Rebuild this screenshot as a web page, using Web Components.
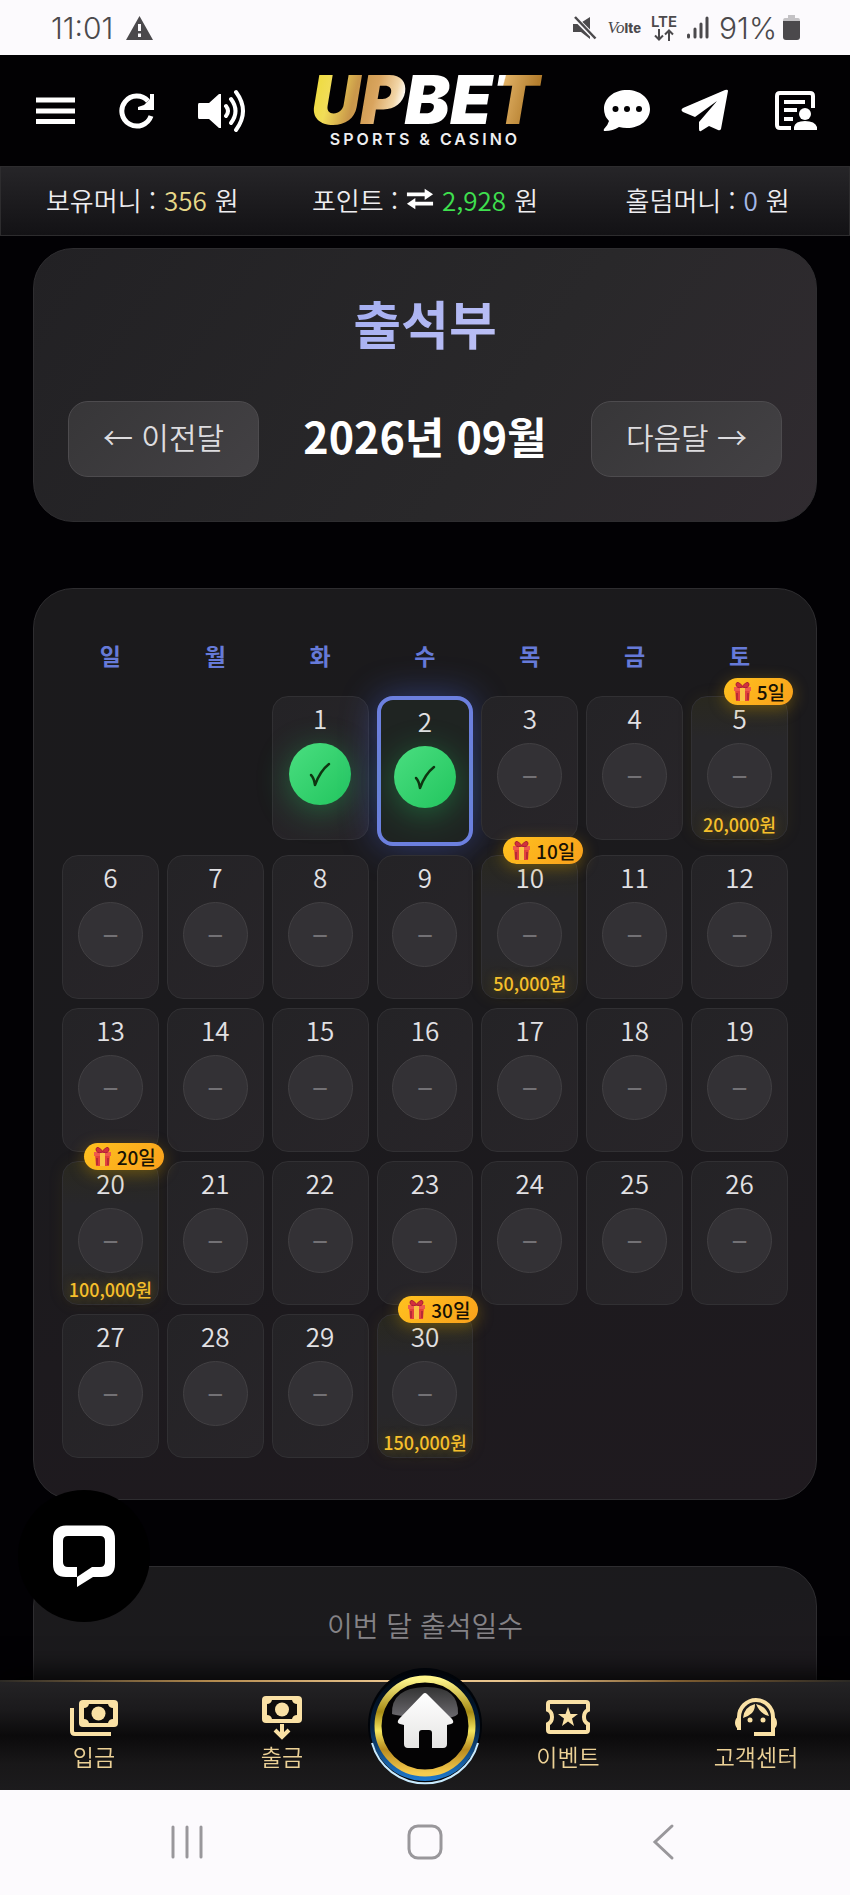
<!DOCTYPE html>
<html lang="ko">
<head>
<meta charset="utf-8">
<meta name="viewport" content="width=device-width, initial-scale=1">
<title>UPBET 출석부</title>
<style>
    html, body {
        height: 100%;
        margin: 0;
    }

    body {
        background: #020104;
        color: #e4e3e6;
        font-family: "Noto Sans CJK KR", "Noto Sans", sans-serif;
        font-size: 26px;
    }
</style>
</head>
<body>
<attendance-app></attendance-app>

<script>
const define = (name, html, setup) => {
    const template = document.createElement('template');
    template.innerHTML = html;

    customElements.define(name, class extends HTMLElement {
        constructor() {
            super();
            this.attachShadow({ mode: 'open' }).append(template.content.cloneNode(true));
        }

        connectedCallback() {
            if (setup) setup(this, this.shadowRoot);
        }
    });
};

define('status-bar', `
    <style>
        :host {
            display: flex;
            align-items: center;
            justify-content: space-between;
            flex: none;
            height: 55px;
            padding: 0 50px 0 51px;
            background: #fcfafd;
            color: #4b494c;
            font-family: Inter, "Liberation Sans", sans-serif;
            font-size: 30px;
            font-weight: 300;
        }
        div { display: flex; align-items: center; }
        .left { gap: 13px; }
        .right { gap: 10px; }
        .lte { font-size: 15px; font-weight: 600; line-height: 14px; display: grid; justify-items: center; }
        .volte { font-size: 13px; font-weight: 800; gap: 0; }
        .volte i { font-family: "Liberation Serif", serif; font-size: 17px; font-weight: 400; }
        .battery { gap: 6px; }
    </style>
    <div class="left">
        <span>11:01</span>
        <svg width="27" height="24" viewBox="0 0 27 24"><path d="M13.5 0 27 24H0Z" fill="#4b494c"/><path d="M13.500 8v7M13.500 17.500v3.500" stroke="#fcfafd" stroke-width="3"/></svg>
    </div>
    <div class="right">
        <svg width="24" height="24" viewBox="0 0 24 24"><path d="M0 8h6l11-7v22l-9-7H0Z" fill="#4b494c"/><path d="M0 0 24 24" stroke="#fcfafd" stroke-width="5"/><path d="M2 1 22.500 22.500" stroke="#4b494c" stroke-width="2.500"/></svg>
        <div class="volte"><i>Vo</i>lte</div>
        <div class="lte">LTE
            <svg width="20" height="12" viewBox="0 0 20 12" fill="none" stroke="#4b494c" stroke-width="2"><path d="M5 0v11M1 6.500l4 4 4-4M15 12V1M11 5.500l4-4 4 4"/></svg>
        </div>
        <svg width="22" height="23" viewBox="0 0 22 23" stroke="#4b494c" stroke-width="3" stroke-linecap="round"><path d="M1.500 19v2M8 13v8M14 8v13M20 2v19"/></svg>
        <div class="battery"><span>91%</span>
            <svg width="17" height="25" viewBox="0 0 17 25"><path d="M5 0h7v3h3q2 0 2 3H0q0-3 2-3h3Z" fill="#c4c2c5"/><path d="M0 6h17v16q0 3-3 3H3q-3 0-3-3Z" fill="#4b494c"/></svg>
        </div>
    </div>
`);

define('brand-logo', `
    <style>
        :host { display: block; text-align: center; }
        a { display: block; text-decoration: none; }
        .name {
            display: block;
            padding: 0 6px;
            font: italic 900 68px/56px Inter, "Liberation Sans", sans-serif;
            color: transparent;
            background: linear-gradient(105deg, #eedb3e 0 5%, #f1dd58 12%, #c9974a 22%, #d9a45e 30%, #f2d6a8 38%, #fff 42% 79%, #e0b064 79.500%, #b27c2c 93%, #d9a84e);
            background-clip: text;
            -webkit-background-clip: text;
        }
        .tag {
            display: block;
            color: #eeeef0;
            font: 600 16px/24px Inter, "Liberation Sans", sans-serif;
            letter-spacing: 3px;
        }
    </style>
    <a href="#"><span class="name">UPBET</span><span class="tag">SPORTS &amp; CASINO</span></a>
`);

define('site-header', `
    <style>
        :host {
            display: grid;
            grid-template-columns: 1fr auto 1fr;
            align-items: center;
            flex: none;
            height: 111px;
            padding: 0 33px;
            background: #020103;
        }
        nav { display: flex; align-items: center; gap: 42px; }
        .links { justify-content: flex-end; gap: 30px; }
        .account { margin-left: 16px; }
        button, a { display: block; padding: 0; border: 0; background: none; color: #fff; }
        svg { display: block; }
    </style>
    <nav>
        <button aria-label="메뉴"><svg width="44" height="44" viewBox="0 0 44 44" stroke="#fff" stroke-width="5"><path d="M3 11h39M3 22h39M3 32.500h39"/></svg></button>
        <button aria-label="새로고침"><svg width="36" height="36" viewBox="0 0 36 36"><path d="M32 23A15 15 0 1 1 29 8" fill="none" stroke="#fff" stroke-width="5"/><path d="M35 1v16H19v-3l6-2 6-6V1Z" fill="#fff"/></svg></button>
        <button aria-label="소리"><svg width="52" height="44" viewBox="0 0 52 44"><path d="M2 14h10L22 5h2v34h-2L12 30H2q-1 0-1-2V16q0-2 1-2Z" fill="#fff"/><g fill="none" stroke="#fff" stroke-width="4" stroke-linecap="round"><path d="M29 17q4 5 0 10M34 10q9 12 0 24M39 3q14 19 0 38"/></g></svg></button>
    </nav>
    <brand-logo></brand-logo>
    <nav class="links">
        <a href="#" aria-label="채팅"><svg width="48" height="43" viewBox="0 0 48 43"><path d="M24 1C37 1 47 9 47 20S37 39 24 39q-4 0-8-1-6 4-14 4-2 0-1-2 4-4 5-8Q1 27 1 20C1 9 11 1 24 1Z" fill="#fff"/><g fill="#020103"><circle cx="12.500" cy="20" r="3"/><circle cx="24" cy="20" r="3"/><circle cx="36" cy="20" r="3"/></g></svg></a>
        <a href="#" aria-label="텔레그램"><svg width="48" height="44" viewBox="0 0 48 44"><path d="M47 2 40 40q-1 2-3 1l-9-4-8 5q-2 1-2-2v-7L36 12 14 28 2 23q-3-2 0-4L44 1q3-1 3 1Z" fill="#fff"/></svg></a>
        <a class="account" href="#" aria-label="내 정보"><svg width="42" height="40" viewBox="0 0 42 40"><path d="M38 17V5q0-3-3-3H5Q2 2 2 5v29q0 3 3 3h11" fill="none" stroke="#fff" stroke-width="4"/><path d="M9 11h21M9 19h13M9 28h9" stroke="#fff" stroke-width="4"/><circle cx="30" cy="23" r="6" fill="#fff"/><path d="M19 39v-3q1-6 11-6t12 6v3Z" fill="#fff"/></svg></a>
    </nav>
`);

define('money-item', `
    <style>
        :host { display: flex; align-items: center; justify-content: center; gap: 8px; padding-bottom: 4px; white-space: nowrap; }
        b { font-weight: inherit; color: var(--amount); }
    </style>
    <span></span>
    <slot></slot>
    <b></b>
    <span>원</span>
`, (host, root) => {
    root.querySelector('span').textContent = host.getAttribute('label') + ' :';
    root.querySelector('b').textContent = host.getAttribute('amount');
});

define('money-bar', `
    <style>
        :host {
            display: grid;
            grid-template-columns: repeat(3, 1fr);
            flex: none;
            height: 68px;
            border: 1px solid #2d2c2e;
            background: linear-gradient(#262528, #131215);
            color: #eeedf0;
            font-size: 26px;
            font-weight: 350;
        }
        button { display: block; padding: 0; border: 0; background: none; }
        svg { display: block; }
    </style>
    <money-item label="보유머니" amount="356" style="--amount: #e8d98a"></money-item>
    <money-item label="포인트" amount="2,928" style="--amount: #3fe04f">
        <button aria-label="포인트 전환"><svg width="28" height="24" viewBox="0 0 30 24" fill="#fff"><path d="M1 5h19V1l9 6-9 6V9H1ZM29 15H10v-4l-9 6 9 6v-4h19Z"/></svg></button>
    </money-item>
    <money-item label="홀덤머니" amount="0" style="--amount: #a4b8e8"></money-item>
`);

define('glass-card', `
    <style>
        :host {
            display: block;
            box-sizing: border-box;
            border: 1px solid #2e2d30;
            border-radius: 40px;
            background: var(--card-fill, linear-gradient(170deg, #1b1a1c, #1b1a1d 50%, #1f1a1f));
        }
    </style>
    <slot></slot>
`);

define('month-nav', `
    <style>
        :host { display: block; }
        h1 {
            width: fit-content;
            margin: 0 auto;
            padding-bottom: 50px;
            font-size: 52px;
            line-height: 56px;
            font-weight: 700;
            color: transparent;
            background: linear-gradient(135deg, #a3adf0, #c4c6f7);
            background-clip: text;
            -webkit-background-clip: text;
        }
        div { display: flex; align-items: center; justify-content: space-between; }
        h2 { margin: 0; padding-bottom: 8px; color: #fff; font-size: 43px; line-height: 60px; font-weight: 700; white-space: nowrap; }
        button {
            height: 76px;
            min-width: 191px;
            padding: 0 0 6px;
            border: 1px solid #4d4b4e;
            border-radius: 20px;
            background: linear-gradient(135deg, #373638, #434144);
            color: #dddcdf;
            font: 350 30px/40px "Noto Sans CJK KR", sans-serif;
        }
    </style>
    <h1>출석부</h1>
    <div>
        <button>← 이전달</button>
        <h2>2026년 09월</h2>
        <button>다음달 →</button>
    </div>
`);

define('bonus-badge', `
    <style>
        :host {
            display: flex;
            align-items: center;
            gap: 5px;
            box-sizing: border-box;
            height: 27px;
            padding: 0 8px 0 9px;
            border-radius: 14px;
            background: linear-gradient(135deg, #ffc21f, #f9a01b);
            box-shadow: 0 4px 16px #c8960066;
            color: #171204;
            font-size: 19px;
            line-height: 26px;
            font-weight: 500;
            white-space: nowrap;
        }
    </style>
    <svg width="19" height="21" viewBox="0 0 19 21">
        <path d="M2 8h15l-1 12H3Z" fill="#e3413d"/>
        <path d="M1 6h17v4H1Z" fill="#ef5a4c"/>
        <path d="M7 7h5v13H7Z" fill="#fbc344"/>
        <path d="M9.500 6Q3 8 3 3q1-4 6.500 2Q15-1 16 3q0 5-6.500 3Z" fill="#d32f3e" stroke="#a81e34"/>
        <path d="M3 12h2v7H3ZM14 12h2v7h-2Z" fill="#b92a36"/>
    </svg>
    <slot></slot>
`);

define('day-cell', `
    <style>
        :host {
            position: relative;
            display: flex;
            flex-direction: column;
            align-items: center;
            height: 138px;
            padding-top: 4px;
            border: 1px solid #313033;
            border-radius: 16px;
            background: linear-gradient(135deg, #242326, #282529);
        }
        :host([today]) {
            border: 4px solid #6c80df;
            background: #1f2422;
            box-shadow: 0 0 36px #4a66e073;
        }
        :host([bonus]) { background: linear-gradient(#29281f, #28272a 30% 70%, #2a2822); box-shadow: 0 0 16px #8a700018; }
        .num { font-size: 26px; line-height: 34px; font-weight: 350; color: #e2e1e4; }
        .mark {
            display: grid;
            place-items: center;
            box-sizing: border-box;
            width: 65px;
            height: 65px;
            margin: 8px 0 4px;
            padding-bottom: 7px;
            border: 1px solid #424043;
            border-radius: 50%;
            background: #333135;
            color: #737175;
            font-size: 30px;
            line-height: 40px;
        }
        :host([checked]) .mark {
            width: 62px;
            height: 62px;
            padding: 0;
            border: 0;
            background: linear-gradient(135deg, #4ade80, #22c55e);
            box-shadow: 0 6px 32px #22c55e66;
        }
        .prize { color: #f5bf2c; font-size: 18px; line-height: 24px; font-weight: 500; white-space: nowrap; text-shadow: 0 0 10px #b8900080; }
        bonus-badge { position: absolute; z-index: 1; top: -19px; right: -6px; }
    </style>
    <span class="num"></span>
    <span class="mark">–</span>
`, (host, root) => {
    root.querySelector('.num').textContent = host.getAttribute('day');

    if (host.hasAttribute('checked')) {
        root.querySelector('.mark').innerHTML = `<svg width="22" height="25" viewBox="0 0 22 25"><path d="M2 13q3 3 4 10Q11 9 20 2" fill="none" stroke="#0f3511" stroke-width="2.500" stroke-linecap="round" stroke-linejoin="round"/></svg>`;
    }

    if (host.hasAttribute('bonus')) {
        root.innerHTML += `<span class="prize">${host.getAttribute('bonus')}원</span><bonus-badge>${host.getAttribute('day')}일</bonus-badge>`;
    }
});

const BONUS = { 5: '20,000', 10: '50,000', 20: '100,000', 30: '150,000' };
const CHECKED = [1, 2];
const TODAY = 2;
const FIRST_WEEKDAY = 2; // Tuesday
const DAYS = 30;

define('attendance-calendar', `
    <style>
        :host { display: block; }
        table { width: 100%; table-layout: fixed; border-collapse: separate; border-spacing: 8px 9px; }
        th { box-sizing: border-box; height: 60px; padding: 0 0 4px; color: #667ad8; font-size: 23px; line-height: 36px; font-weight: 700; }
        td { padding: 0; vertical-align: top; }
    </style>
    <table>
        <thead><tr><th>일</th><th>월</th><th>화</th><th>수</th><th>목</th><th>금</th><th>토</th></tr></thead>
        <tbody></tbody>
    </table>
`, (host, root) => {
    let rows = '';
    for (let start = 1 - FIRST_WEEKDAY; start <= DAYS; start += 7) {
        rows += '<tr>';
        for (let day = start; day < start + 7; day++) {
            if (day < 1 || day > DAYS) {
                rows += '<td></td>';
                continue;
            }
            const flags = [
                CHECKED.includes(day) ? 'checked' : '',
                day === TODAY ? 'today' : '',
                BONUS[day] ? `bonus="${BONUS[day]}"` : ''
            ].join(' ');
            rows += `<td><day-cell day="${day}" ${flags}></day-cell></td>`;
        }
        rows += '</tr>';
    }
    root.querySelector('tbody').innerHTML = rows;
});

define('chat-launcher', `
    <style>
        :host { display: block; }
        button { display: grid; place-items: center; width: 132px; height: 132px; padding: 0; border: 0; border-radius: 50%; background: #000; }
    </style>
    <button aria-label="상담 채팅">
        <svg width="64" height="64" viewBox="0 0 64 64"><path d="M14 1.500H50Q63 2 63 15V40Q63 53 50 53H41L25 63V53H14Q1 53 1 40V15Q1 2 14 1.500Z" fill="#fff"/><path d="M16 12H48Q53 12 53 17V38Q53 43 48 43H40L25 53V43H16Q11 43 11 38V17Q11 12 16 12Z" fill="#000"/></svg>
    </button>
`);

define('nav-item', `
    <style>
        :host { display: block; }
        a {
            display: flex;
            flex-direction: column;
            align-items: center;
            padding-top: 12px;
            color: #ecd196;
            font-size: 23px;
            line-height: 28px;
            font-weight: 350;
            text-decoration: none;
        }
        ::slotted(svg) { display: block; height: 48px; }
    </style>
    <a href="#"><slot name="icon"></slot><slot></slot></a>
`);

define('home-button', `
    <style>
        :host { display: block; }
        a { display: block; }
        svg { display: block; }
    </style>
    <a href="#" aria-label="홈">
        <svg width="116" height="120" viewBox="0 0 116 120">
            <defs>
                <linearGradient id="gold" x1="0" y1="0" x2="0" y2="1"><stop offset="0" stop-color="#fff68c"/><stop offset=".35" stop-color="#a68a14"/><stop offset=".55" stop-color="#f3e55e"/><stop offset=".75" stop-color="#b98b1f"/><stop offset="1" stop-color="#f6cb4e"/></linearGradient>
                <linearGradient id="blue" x1="0" y1="0" x2="0" y2="1"><stop offset="0" stop-color="#010308"/><stop offset=".5" stop-color="#03203f"/><stop offset="1" stop-color="#1f7bd0"/></linearGradient>
                <linearGradient id="gloss" x1="0" y1="0" x2="0" y2="1"><stop offset="0" stop-color="#333"/><stop offset="1" stop-color="#6d6b70"/></linearGradient>
                <linearGradient id="roof" x1="0" y1="0" x2="0" y2="1"><stop offset="0" stop-color="#fff"/><stop offset="1" stop-color="#e6e5e4"/></linearGradient>
            </defs>
            <circle cx="58" cy="59" r="57" fill="#010409"/>
            <circle cx="58" cy="60" r="55" fill="url(#blue)"/>
            <path d="M5 77A55 55 0 0 0 111 77" fill="none" stroke="#c9ebff" stroke-width="2"/>
            <circle cx="58" cy="60" r="47" fill="#040304" stroke="url(#gold)" stroke-width="7"/>
            <path d="M25 48Q24 22 58 21T91 48Q86 54 58 52T25 48Z" fill="url(#gloss)"/>
            <path d="M56 28q2-2 4 0l25 25q3 4-1 5l-4 1v19q0 4-4 4H65V67q0-3-3-3h-7q-3 0-3 3v15H41q-4 0-4-4V59l-4-1q-4-1-1-5Z" fill="url(#roof)"/>
        </svg>
    </a>
`);

define('bottom-nav', `
    <style>
        :host {
            position: relative;
            display: grid;
            grid-template-columns: 1fr 1fr 98px 1fr 1fr;
            flex: none;
            height: 108px;
            background: linear-gradient(#242325, #1b1a1c 25%, #0b0a0b 50%, #181718 75%, #1c1b1d);
            border-top: 2px solid;
            border-image: linear-gradient(90deg, #2b2925, #b38a4e 25%, #e9c48d 45% 60%, #7d5c30 80%, #2b2925) 1;
            box-shadow: 0 -8px 24px #000c;
        }
        home-button { justify-self: center; margin-top: -16px; }
    </style>
    <nav-item>
        <svg slot="icon" width="48" height="48" viewBox="0 0 48 48"><path d="M2 14v23q0 3 3 3h36" fill="none" stroke="#fae1a5" stroke-width="4"/><rect x="9" y="6" width="39" height="27" rx="4" fill="#fae1a5"/><path d="M19 10h19q1 4 5 4v11q-4 0-5 4H19q-1-4-5-4V14q4 0 5-4Z" fill="#100e0d"/><circle cx="28.500" cy="19.500" r="7" fill="#fae1a5"/></svg>
        입금
    </nav-item>
    <nav-item>
        <svg slot="icon" width="42" height="48" viewBox="0 0 42 48"><rect x="1" y="2" width="40" height="27" rx="4" fill="#fae1a5"/><path d="M11 6h20q1 4 5 4v11q-4 0-5 4H11q-1-4-5-4V10q4 0 5-4Z" fill="#100e0d"/><circle cx="21" cy="15.500" r="7" fill="#fae1a5"/><path d="M21 30v12M14 36l7 7 7-7" fill="none" stroke="#fae1a5" stroke-width="4"/></svg>
        출금
    </nav-item>
    <home-button></home-button>
    <nav-item>
        <svg slot="icon" width="44" height="48" viewBox="0 0 44 48"><path d="M4 8h36q2 0 2 2v6q-4 2-4 7t4 7v6q0 2-2 2H4q-2 0-2-2v-6q4-2 4-7t-4-7v-6q0-2 2-2Z" fill="none" stroke="#fae1a5" stroke-width="4"/><path d="m22 13 2.500 7h7.500l-6 4.500 2 7.500-6-4.500-6 4.500 2-7.500-6-4.500h7.500Z" fill="#fae1a5"/></svg>
        이벤트
    </nav-item>
    <nav-item>
        <svg slot="icon" width="44" height="48" viewBox="0 0 44 48"><path d="M5 36V23a17 17 0 0 1 34 0v17H20" fill="none" stroke="#fae1a5" stroke-width="4"/><path d="M5 22q-4 2-4 7t5 7ZM39 22q4 2 4 7t-4 6Z" fill="#fae1a5"/><path d="M9 24q1-11 12-14 0 6-3 9t-9 5ZM35 22q-9-2-13-12 10 2 13 12Z" fill="#fae1a5"/><circle cx="16" cy="26" r="2.500" fill="#fae1a5"/><circle cx="29" cy="26" r="2.500" fill="#fae1a5"/></svg>
        고객센터
    </nav-item>
`);

define('system-nav', `
    <style>
        :host {
            position: relative;
            display: grid;
            grid-template-columns: repeat(3, 1fr);
            justify-items: center;
            align-items: center;
            flex: none;
            box-sizing: border-box;
            height: 105px;
            padding: 0 68px 2px;
            background: #fcfafd;
        }
        button { padding: 0; border: 0; background: none; }
        svg { display: block; fill: none; stroke: #99979b; stroke-width: 3; stroke-linecap: round; }
    </style>
    <button aria-label="최근 앱"><svg width="34" height="36" viewBox="0 0 34 36"><path d="M3 3v30M17 3v30M31 3v30"/></svg></button>
    <button aria-label="홈 화면"><svg width="36" height="36" viewBox="0 0 36 36"><rect x="2" y="2" width="32" height="32" rx="9"/></svg></button>
    <button aria-label="뒤로"><svg width="24" height="38" viewBox="0 0 24 38"><path d="M21 3 4 19l17 16"/></svg></button>
`);

define('attendance-app', `
    <style>
        :host {
            position: relative;
            display: flex;
            flex-direction: column;
            height: 100vh;
            min-height: 600px;
            overflow: hidden;
        }
        main {
            display: flex;
            flex: 1;
            flex-direction: column;
            gap: 66px;
            min-height: 0;
            padding: 12px 33px 0;
            overflow-y: auto;
            scrollbar-width: none;
            background: #020104;
        }
        glass-card { flex: none; }
        .month { --card-fill: linear-gradient(125deg, #222124, #29282a 60%, #302b30); padding: 46px 34px 44px; }
        .calendar { padding: 29px 20px 32px; }
        .summary { padding: 38px 34px 100px; text-align: center; }
        p { margin: 0; color: #858387; font-size: 28px; line-height: 40px; font-weight: 350; }
        chat-launcher { position: absolute; left: 18px; bottom: 273px; }
    </style>
    <status-bar></status-bar>
    <site-header></site-header>
    <money-bar></money-bar>
    <main>
        <glass-card class="month"><month-nav></month-nav></glass-card>
        <glass-card class="calendar"><attendance-calendar></attendance-calendar></glass-card>
        <glass-card class="summary"><p>이번 달 출석일수</p></glass-card>
    </main>
    <bottom-nav></bottom-nav>
    <system-nav></system-nav>
    <chat-launcher></chat-launcher>
`);
</script>
</body>
</html>
